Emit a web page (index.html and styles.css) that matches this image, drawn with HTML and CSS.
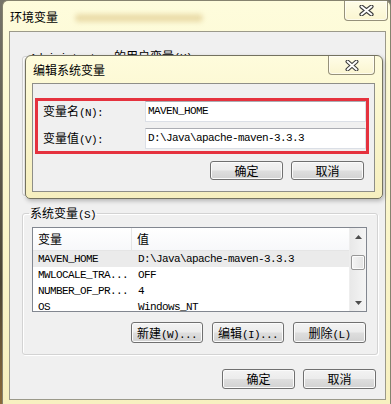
FILE: index.html
```html
<!DOCTYPE html>
<html lang="zh-CN">
<head>
<meta charset="utf-8">
<title>环境变量</title>
<link rel="stylesheet" href="styles.css">
</head>
<body>
<div class="win">
  <div class="titlebar">
    <span class="title">环境变量</span>
    <span class="smudge"></span>
    <span class="close">
      <svg width="15" height="11" viewBox="0 0 15 11"><path d="M2.5 1.5L12.5 9.5M12.5 1.5L2.5 9.5" stroke="#3c3c3c" stroke-width="4.2" stroke-linecap="round"/><path d="M2.5 1.5L12.5 9.5M12.5 1.5L2.5 9.5" stroke="#fff" stroke-width="2" stroke-linecap="round"/></svg>
    </span>
  </div>
  <div class="client">
    <fieldset class="group user">
      <legend><span class="m">Administrator </span>的用户变量<span class="m">(U)</span></legend>
    </fieldset>
    <fieldset class="group sys">
      <legend>系统变量<span class="m">(S)</span></legend>
      <div class="list">
        <div class="list-body">
          <div class="lhead"><span class="c1">变量</span><span class="c2">值</span></div>
          <div class="row sel"><span class="c1 m">MAVEN_HOME</span><span class="c2 m">D:\Java\apache-maven-3.3.3</span></div>
          <div class="row"><span class="c1 m">MWLOCALE_TRA...</span><span class="c2 m">OFF</span></div>
          <div class="row"><span class="c1 m">NUMBER_OF_PR...</span><span class="c2 m">4</span></div>
          <div class="row"><span class="c1 m">OS</span><span class="c2 m">Windows_NT</span></div>
        </div>
        <div class="vscroll">
          <div class="sb-btn"><svg width="7" height="4" viewBox="0 0 7 4"><path d="M0 4L3.5 0L7 4Z" fill="#4d4d4d"/></svg></div>
          <div class="sb-track"><div class="thumb"></div></div>
          <div class="sb-btn"><svg width="7" height="4" viewBox="0 0 7 4"><path d="M0 0L3.5 4L7 0Z" fill="#4d4d4d"/></svg></div>
        </div>
      </div>
      <div class="btnrow grp">
        <button class="btn w72">新建<span class="m">(W)...</span></button>
        <button class="btn w72">编辑<span class="m">(I)...</span></button>
        <button class="btn w73">删除<span class="m">(L)</span></button>
      </div>
    </fieldset>
    <div class="btnrow bottom">
      <button class="btn w73">确定</button>
      <button class="btn w73">取消</button>
    </div>
  </div>

  <div class="dialog">
    <div class="dtitlebar">
      <span class="dtitle">编辑系统变量</span>
      <span class="close dclose">
        <svg width="14" height="11" viewBox="0 0 14 11"><path d="M2.5 1.5L11.5 9.5M11.5 1.5L2.5 9.5" stroke="#3c3c3c" stroke-width="4" stroke-linecap="round"/><path d="M2.5 1.5L11.5 9.5M11.5 1.5L2.5 9.5" stroke="#fff" stroke-width="1.9" stroke-linecap="round"/></svg>
      </span>
    </div>
    <div class="dclient">
      <div class="redbox">
        <div class="field"><span class="lbl">变量名<span class="m">(N):</span></span><div class="input m">MAVEN_HOME</div></div>
        <div class="field"><span class="lbl">变量值<span class="m">(V):</span></span><div class="input m">D:\Java\apache-maven-3.3.3</div></div>
      </div>
      <div class="btnrow dlg">
        <button class="btn w73 h19">确定</button>
        <button class="btn w73 h19">取消</button>
      </div>
    </div>
  </div>
</div>
</body>
</html>
```
FILE: styles.css
```css
* { box-sizing: border-box; }
html, body { margin: 0; padding: 0; }
body {
  width: 391px;
  height: 404px;
  overflow: hidden;
  background: linear-gradient(#76746a, #4a4434 70%, #8a6a3a);
  font-family: "Noto Sans CJK SC", "Liberation Sans", sans-serif;
  font-size: 12px;
  color: #000;
}
.m {
  font-family: "Liberation Mono", monospace;
  font-size: 11px;
  letter-spacing: -0.6px;
}

/* outer window */
.win {
  position: relative;
  margin-left: 2px;
  width: 389px;
  height: 404px;
  border: 1px solid #86836f;
  border-bottom: none;
  border-radius: 6px 6px 0 0;
  background: linear-gradient(#fefcdc, #fbf7cd 40%, #f7f0c0);
  padding: 0 4px 0 6px;
  display: flex;
  flex-direction: column;
}
.titlebar {
  height: 30px;
  display: flex;
  align-items: flex-start;
  flex: none;
}
.title {
  margin: 9px 0 0 1px;
  line-height: 14px;
  font-size: 12px;
}
.smudge {
  width: 128px;
  height: 8px;
  margin: 13px 0 0 17px;
  background: #e2cf95;
  filter: blur(2.5px);
  opacity: .7;
  border-radius: 4px;
}
.close {
  margin-left: auto;
  margin-right: -2px;
  width: 44px;
  height: 20px;
  border: 1px solid #96917a;
  border-top: none;
  border-radius: 0 0 4px 4px;
  background: linear-gradient(#fffde8, #faf5d0);
  box-shadow: inset 0 0 0 1px rgba(255,255,255,.6);
  display: flex;
  align-items: center;
  justify-content: center;
}
.close svg { display: block; }

/* client area */
.client {
  height: 369px;
  flex: none;
  background: #f0f0f0;
  border: 1px solid #9b998a;
  display: flex;
  flex-direction: column;
}
fieldset.group {
  margin: 0 7px 0 12px;
  width: 356px;
  min-width: 0;
  border: 1px solid #d3d3d3;
  border-radius: 3px;
  box-shadow: inset 1px 1px 0 #fff, 1px 1px 0 #fff;
  padding: 0 10px 11px 9px;
}
fieldset.group legend {
  margin-left: -3px;
  padding: 0 1px;
  line-height: 14px;
  height: 14px;
  font-size: 12px;
}
fieldset.user {
  margin-top: 17px;
  height: 147px;
}
fieldset.sys {
  margin-top: 10px;
}

/* list view */
.list {
  margin-top: 7px;
  height: 85px;
  border: 1px solid #828790;
  background: #fff;
  display: flex;
  overflow: hidden;
}
.list-body {
  flex: 1;
  overflow: hidden;
}
.lhead {
  height: 23px;
  display: flex;
  line-height: 22px;
  border-bottom: 1px solid #e5e5e5;
  background: linear-gradient(#ffffff, #f7f8fa);
}
.lhead .c1 {
  width: 99px;
  padding-left: 5px;
  border-right: 1px solid #e5e5e5;
}
.lhead .c2 { padding-left: 5px; }
.row {
  height: 16px;
  line-height: 16px;
  display: flex;
  white-space: nowrap;
}
.row .c1 { width: 99px; padding-left: 5px; flex: none; }
.row .c2 { padding-left: 6px; }
.row.sel { background: #ebebeb; }

.vscroll {
  width: 17px;
  flex: none;
  display: flex;
  flex-direction: column;
  background: linear-gradient(90deg, #e8e8e8, #f5f5f5);
  border-left: 1px solid #eeeeee;
}
.sb-btn {
  height: 17px;
  display: flex;
  align-items: center;
  justify-content: center;
  flex: none;
}
.sb-btn svg { display: block; }
.sb-track {
  flex: 1;
  padding: 10px 1px 0 1px;
}
.thumb {
  height: 15px;
  border: 1px solid #979797;
  border-radius: 2px;
  background: linear-gradient(90deg, #f4f4f4, #e3e3e3);
  box-shadow: inset 0 0 0 1px #fbfbfb;
}

/* buttons */
.btnrow {
  display: flex;
  justify-content: flex-end;
}
.btnrow.grp {
  margin-top: 10px;
  gap: 9px;
  padding-right: 1px;
}
.btnrow.bottom {
  margin-top: 14px;
  gap: 8px;
  padding-right: 9px;
}
.btnrow.dlg {
  margin-top: 7px;
  gap: 8px;
  padding-right: 10px;
}
.btn {
  height: 21px;
  padding: 0;
  margin: 0;
  font-family: "Noto Sans CJK SC", "Liberation Sans", sans-serif;
  font-size: 12px;
  line-height: 19px;
  color: #000;
  border: 1px solid #707070;
  border-radius: 3px;
  background: linear-gradient(#f3f3f3 0%, #ececec 48%, #dedede 52%, #d2d2d2 100%);
  box-shadow: inset 0 0 0 1px #fbfbfb;
  white-space: nowrap;
}
.bottom .btn { height: 20px; line-height: 18px; }
.btn.h19 { height: 19px; line-height: 17px; }
.w72 { width: 72px; }
.w73 { width: 73px; }

/* edit dialog (overlays the window) */
.dialog {
  position: absolute;
  left: 22px;
  top: 54px;
  width: 358px;
  height: 144px;
  border: 1px solid #74725f;
  border-radius: 6px 6px 5px 5px;
  background: linear-gradient(#fefcdc, #faf5cb 50%, #f6efbf);
  padding: 0 7px 6px 6px;
  display: flex;
  flex-direction: column;
  box-shadow: 1px 2px 4px rgba(0,0,0,.25);
}
.dtitlebar {
  height: 27px;
  display: flex;
  align-items: flex-start;
  flex: none;
}
.dtitle {
  margin: 7px 0 0 1px;
  line-height: 14px;
}
.dclose {
  margin-right: 0;
  width: 47px;
  height: 19px;
}
.dclient {
  height: 109px;
  flex: none;
  background: #f0f0f0;
  border: 1px solid #8e8e88;
}
.redbox {
  margin: 14px 5px 0 2px;
  border: 3px solid #e5323e;
  padding: 0 0 2px 5px;
  display: flex;
  flex-direction: column;
  gap: 6px;
}
.field {
  height: 21px;
  display: flex;
  align-items: center;
}
.lbl {
  width: 102px;
  flex: none;
  line-height: 14px;
}
.input {
  flex: 1;
  height: 21px;
  line-height: 19px;
  background: #fff;
  border: 1px solid #dbdfe6;
  border-top-color: #abadb3;
  padding-left: 2px;
  white-space: nowrap;
  overflow: hidden;
}
```
